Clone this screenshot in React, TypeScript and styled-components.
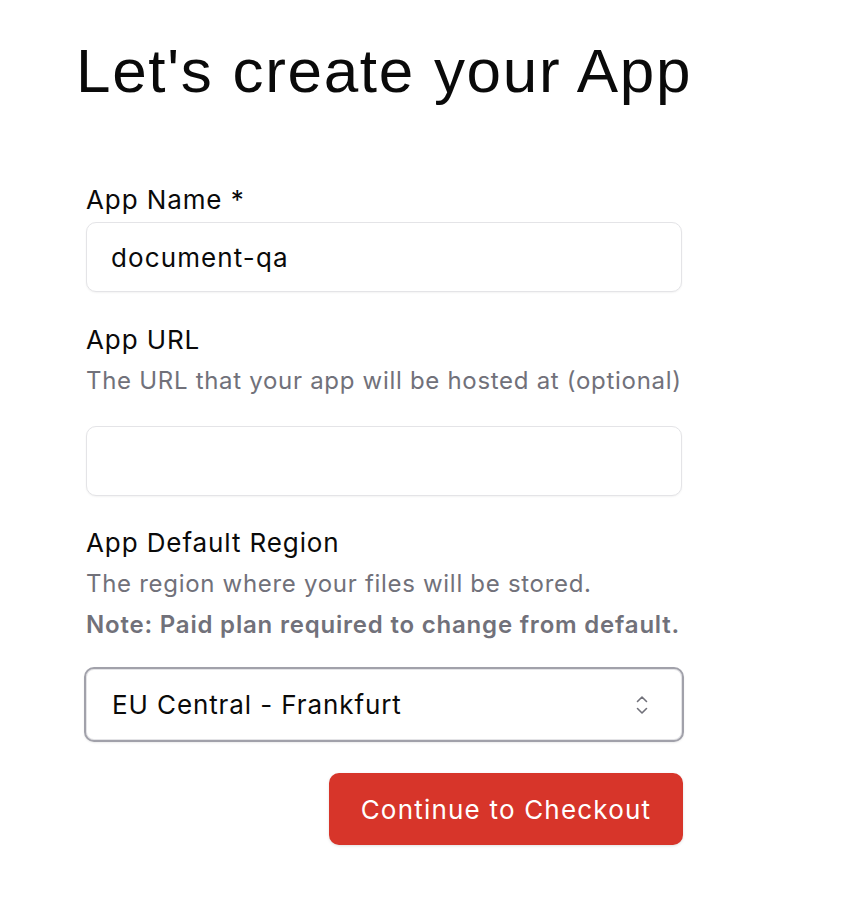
import React from "react";
import styled, { createGlobalStyle } from "styled-components";

const GlobalStyle = createGlobalStyle`
  html, body { margin: 0; padding: 0; background: #ffffff; }
  body { font-family: Inter, "Noto Sans", sans-serif; color: #0a0a0a; }
  * { box-sizing: border-box; }
`;

const Page = styled.div`
  padding: 34px 0 0 76px;
  width: 866px;
  min-height: 912px;
`;

const Heading = styled.h1`
  margin: 0;
  font-family: "Liberation Sans", Arial, sans-serif;
  font-weight: 400;
  font-size: 62px;
  line-height: 74px;
  letter-spacing: 1.7px;
  color: #0a0a0a;
`;

const Form = styled.form`
  margin: 71px 0 0 10px;
  width: 596px;
  display: flex;
  flex-direction: column;
`;

const Field = styled.div<{ $gap?: number }>`
  display: flex;
  flex-direction: column;
  margin-top: ${(p) => p.$gap ?? 0}px;
`;

const Label = styled.label`
  font-size: 26px;
  line-height: 41px;
  font-weight: 400;
  letter-spacing: 0.9px;
  color: #0a0a0a;
`;

const Hint = styled.div<{ $bold?: boolean }>`
  font-size: 24px;
  line-height: 41px;
  color: #71717a;
  letter-spacing: ${(p) => (p.$bold ? 0.8 : 0.7)}px;
  font-weight: ${(p) => (p.$bold ? 600 : 400)};
`;

const TextInput = styled.input<{ $mt: number }>`
  margin-top: ${(p) => p.$mt}px;
  width: 596px;
  height: 70px;
  border: 1.5px solid #e4e4e7;
  border-radius: 10px;
  padding: 0 24px;
  font-family: Inter, sans-serif;
  font-size: 26px;
  letter-spacing: 1.1px;
  color: #0a0a0a;
  background: #fff;
  box-shadow: 0 1px 2px rgba(0, 0, 0, 0.05);
  outline: none;
`;

const SelectBox = styled.div`
  margin: 22px 0 0 -2px;
  width: 600px;
  height: 75px;
  border: 2px solid #a1a1aa;
  border-radius: 10px;
  box-shadow: inset 0 0 0 1px #e4e4e7, 0 1px 2px rgba(0, 0, 0, 0.08);
  display: flex;
  align-items: center;
  justify-content: space-between;
  padding: 0 32px 0 26px;
  font-size: 26px;
  letter-spacing: 0.9px;
  color: #0a0a0a;
  background: #fff;
`;

const Actions = styled.div`
  display: flex;
  justify-content: flex-end;
  margin-top: 31px;
`;

const Button = styled.button`
  width: 354px;
  height: 72px;
  margin-right: -1px;
  border: none;
  border-radius: 10px;
  background: #d7352a;
  color: #ffffff;
  font-family: Inter, sans-serif;
  font-size: 26px;
  font-weight: 400;
  letter-spacing: 1.2px;
  box-shadow: 0 1px 3px rgba(0, 0, 0, 0.12);
  cursor: pointer;
`;

const Chevrons = () => (
  <svg width="16" height="22" viewBox="0 0 16 22" fill="none" stroke="#71717a" strokeWidth="1.6" strokeLinecap="round" strokeLinejoin="round">
    <path d="M3.5 7.5 L8 3 L12.5 7.5" />
    <path d="M3.5 14.5 L8 19 L12.5 14.5" />
  </svg>
);

export default function App() {
  return (
    <>
      <GlobalStyle />
      <Page>
        <Heading>Let's create your App</Heading>
        <Form onSubmit={(e) => e.preventDefault()}>
          <Field>
            <Label>App Name *</Label>
            <TextInput $mt={2} defaultValue="document-qa" />
          </Field>
          <Field $gap={27}>
            <Label>App URL</Label>
            <Hint>The URL that your app will be hosted at (optional)</Hint>
            <TextInput $mt={25} defaultValue="" />
          </Field>
          <Field $gap={26}>
            <Label>App Default Region</Label>
            <Hint>The region where your files will be stored.</Hint>
            <Hint $bold>Note: Paid plan required to change from default.</Hint>
            <SelectBox>
              <span>EU Central - Frankfurt</span>
              <Chevrons />
            </SelectBox>
          </Field>
          <Actions>
            <Button type="button">Continue to Checkout</Button>
          </Actions>
        </Form>
      </Page>
    </>
  );
}
